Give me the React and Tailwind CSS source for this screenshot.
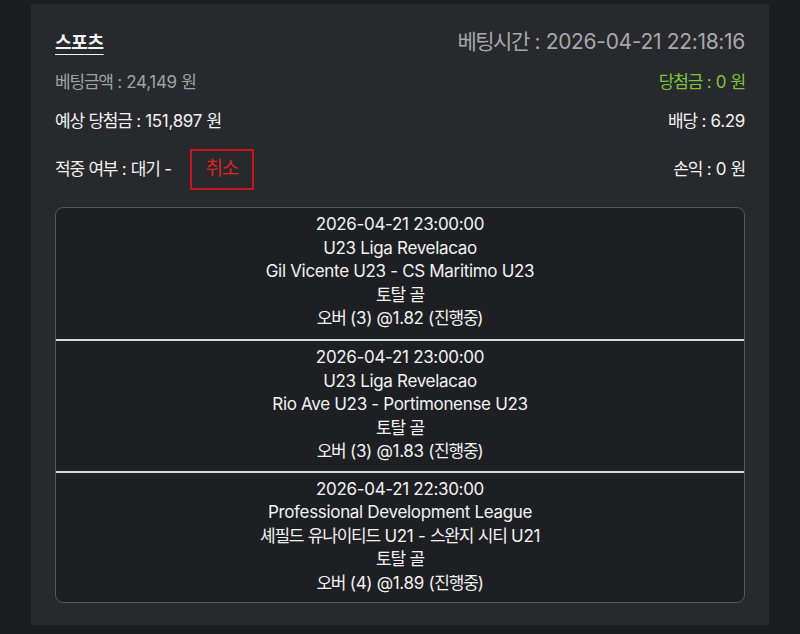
import React from "react";

const font = { fontFamily: 'Inter, "Noto Sans CJK KR", sans-serif' };

const bets = [
  {
    time: "2026-04-21 23:00:00",
    league: "U23 Liga Revelacao",
    match: "Gil Vicente U23 - CS Maritimo U23",
    market: "토탈 골",
    pick: "오버 (3) @1.82 (진행중)",
  },
  {
    time: "2026-04-21 23:00:00",
    league: "U23 Liga Revelacao",
    match: "Rio Ave U23 - Portimonense U23",
    market: "토탈 골",
    pick: "오버 (3) @1.83 (진행중)",
  },
  {
    time: "2026-04-21 22:30:00",
    league: "Professional Development League",
    match: "셰필드 유나이티드 U21 - 스완지 시티 U21",
    market: "토탈 골",
    pick: "오버 (4) @1.89 (진행중)",
  },
];

function T({ children }) {
  const parts = String(children).split(/([\uAC00-\uD7A3]+)/);
  return (
    <>
      {parts.map((p, i) =>
        /[\uAC00-\uD7A3]/.test(p) ? (
          <span key={i} className="tracking-[-0.07em]">
            {p}
          </span>
        ) : (
          <React.Fragment key={i}>{p}</React.Fragment>
        )
      )}
    </>
  );
}

export default function App() {
  return (
    <div
      className="w-[800px] h-[634px] bg-[#1c1d21] pt-[4px] pl-[31px] text-[#f2f2f2] tracking-[-0.02em]"
      style={font}
    >
      <div className="w-[738px] h-[621px] bg-[#28292d] px-6 pt-[23px]">
        <div className="flex justify-between items-center h-[30px]">
          <span className="text-[18px] font-semibold underline underline-offset-[5px] decoration-1">
            스포츠
          </span>
          <span className="text-[21px] text-[#a7a8ac]">
            <T>베팅시간 : 2026-04-21 22:18:16</T>
          </span>
        </div>
        <div className="flex justify-between items-center h-[24px] mt-[14px] text-[17px]">
          <span className="text-[#a0a1a5]">
            <T>베팅금액 : 24,149 원</T>
          </span>
          <span className="text-[#7cc53f]">
            <T>당첨금 : 0 원</T>
          </span>
        </div>
        <div className="flex justify-between items-center h-[24px] mt-[15px] text-[17px]">
          <span>
            <T>예상 당첨금 : 151,897 원</T>
          </span>
          <span>
            <T>배당 : 6.29</T>
          </span>
        </div>
        <div className="flex justify-between items-center h-[41px] mt-[15px] text-[17px]">
          <div className="flex items-center">
            <span>
              <T>적중 여부 : 대기 -</T>
            </span>
            <button className="ml-[18px] w-[64px] h-[41px] border-2 border-[#c81616] text-[#dd2222] text-[19px]">
              <T>취소</T>
            </button>
          </div>
          <span>
            <T>손익 : 0 원</T>
          </span>
        </div>
        <div className="mt-[17px] h-[396px] border border-[#55565b] rounded-[8px] bg-[#1e1f23] overflow-hidden">
          {bets.map((b, i) => (
            <div
              key={i}
              className={`flex flex-col items-center text-[17px] leading-[23.5px] pt-[5px] h-[131.3px] ${
                i > 0 ? "border-t-2 border-[#d8d8d8]" : ""
              }`}
            >
              <span><T>{b.time}</T></span>
              <span><T>{b.league}</T></span>
              <span><T>{b.match}</T></span>
              <span><T>{b.market}</T></span>
              <span><T>{b.pick}</T></span>
            </div>
          ))}
        </div>
      </div>
    </div>
  );
}
